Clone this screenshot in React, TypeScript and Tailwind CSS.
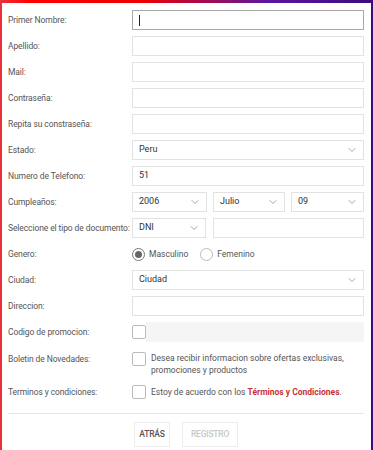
import { ChevronDown } from "lucide-react";

const font = { fontFamily: "Roboto, 'Liberation Sans', sans-serif" };

function Label({ text }: { text: string }) {
  return (
    <div className="w-[124px] shrink-0 whitespace-nowrap text-[8.5px] tracking-[-0.1px] text-[#555]">
      {text}
    </div>
  );
}

function TextInput({ focused, value }: { focused?: boolean; value?: string }) {
  return (
    <div
      className={`flex-1 h-[20px] border bg-white flex items-center px-[6px] text-[9px] text-[#333] ${
        focused ? "border-[#a8a8a8]" : "border-[#e2e2e2]"
      }`}
    >
      {focused && <div className="w-px h-[11px] bg-[#222]" />}
      {value}
    </div>
  );
}

function Select({ value, className }: { value: string; className?: string }) {
  return (
    <div
      className={`h-[20px] border border-[#e2e2e2] bg-white flex items-center justify-between pl-[6px] pr-[5px] text-[9px] text-[#333] ${
        className ?? "flex-1"
      }`}
    >
      <span>{value}</span>
      <ChevronDown size={12} strokeWidth={1.3} className="text-[#777]" />
    </div>
  );
}

function Checkbox() {
  return <div className="w-[14px] h-[14px] shrink-0 border border-[#bbb] rounded-[2px] bg-white" />;
}

function Radio({ checked }: { checked?: boolean }) {
  return (
    <div
      className={`w-[13px] h-[13px] rounded-full border flex items-center justify-center ${
        checked ? "border-[#777]" : "border-[#bbb]"
      }`}
    >
      {checked && <div className="w-[7px] h-[7px] rounded-full bg-[#666]" />}
    </div>
  );
}

function Row({ label, children }: { label: string; children: React.ReactNode }) {
  return (
    <div className="flex items-center h-[20px]">
      <Label text={label} />
      <div className="flex-1 flex items-center">{children}</div>
    </div>
  );
}

export default function App() {
  return (
    <div
      style={font}
      className="w-[373px] h-[450px] pt-[3px] px-[2px] bg-[linear-gradient(90deg,#e8323c_0%,#ff0000_8%,#ee0000_38%,#5a16a0_72%,#3a0c80_100%)]"
    >
      <div className="h-full bg-white pl-[6px] pr-[7px] pt-[7px] flex flex-col">
        <div className="flex flex-col gap-[6px]">
          <Row label="Primer Nombre:">
            <TextInput focused />
          </Row>
          <Row label="Apellido:">
            <TextInput />
          </Row>
          <Row label="Mail:">
            <TextInput />
          </Row>
          <Row label="Contraseña:">
            <TextInput />
          </Row>
          <Row label="Repita su constraseña:">
            <TextInput />
          </Row>
          <Row label="Estado:">
            <Select value="Peru" />
          </Row>
          <Row label="Numero de Telefono:">
            <TextInput value="51" />
          </Row>
          <Row label="Cumpleaños:">
            <div className="flex-1 flex gap-[6px]">
              <Select value="2006" className="w-[75px]" />
              <Select value="Julio" className="w-[72px]" />
              <Select value="09" className="flex-1" />
            </div>
          </Row>
          <Row label="Seleccione el tipo de documento:">
            <div className="flex-1 flex gap-[7px]">
              <Select value="DNI" className="w-[74px]" />
              <TextInput />
            </div>
          </Row>
          <Row label="Genero:">
            <div className="flex items-center text-[8.5px] text-[#555]">
              <Radio checked />
              <span className="ml-[4px]">Masculino</span>
              <div className="ml-[12px]">
                <Radio />
              </div>
              <span className="ml-[4px]">Femenino</span>
            </div>
          </Row>
          <Row label="Ciudad:">
            <Select value="Ciudad" />
          </Row>
          <Row label="Direccion:">
            <TextInput />
          </Row>
          <Row label="Codigo de promocion:">
            <Checkbox />
            <div className="flex-1 h-[20px] bg-[#f5f5f5]" />
          </Row>
          <div className="flex items-start h-[28px]">
            <div className="mt-[5px]">
              <Label text="Boletin de Novedades:" />
            </div>
            <div className="flex-1 flex items-start pt-[4px]">
              <Checkbox />
              <div className="ml-[5px] text-[8.5px] leading-[12px] text-[#555]">
                Desea recibir informacion sobre ofertas exclusivas,
                <br />
                promociones y productos
              </div>
            </div>
          </div>
          <Row label="Terminos y condiciones:">
            <Checkbox />
            <div className="ml-[5px] whitespace-nowrap text-[8.5px] text-[#555]">
              Estoy de acuerdo con los{" "}
              <span className="font-bold text-[#c8323a]">Términos y Condiciones</span>.
            </div>
          </Row>
        </div>
        <div className="mt-[11px] h-px bg-[#e6e6e6]" />
        <div className="mt-[8px] flex justify-center gap-[12px]">
          <button className="w-[36px] h-[25px] border border-[#ececec] text-[8.5px] font-medium text-[#555] tracking-tight">
            ATRÁS
          </button>
          <button className="w-[56px] h-[25px] border border-[#ececec] text-[8.5px] font-medium text-[#c8c8c8] tracking-tight">
            REGISTRO
          </button>
        </div>
      </div>
    </div>
  );
}
